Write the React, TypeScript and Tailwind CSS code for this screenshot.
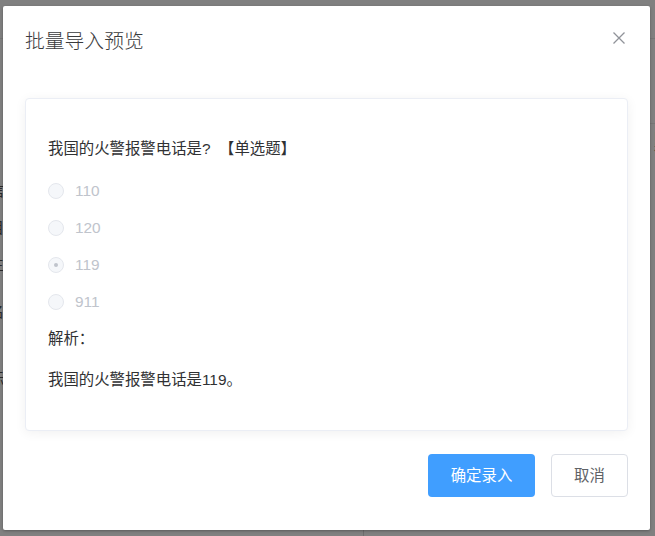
const options = [
  { label: '110', checked: false },
  { label: '120', checked: false },
  { label: '119', checked: true },
  { label: '911', checked: false },
];

function Radio({ label, checked }: { label: string; checked: boolean }) {
  return (
    <label className="flex h-[37px] items-center cursor-not-allowed">
      <span className="flex h-[16px] w-[16px] items-center justify-center rounded-full border border-[#e4e7ed] bg-[#f5f7fa]">
        {checked && <span className="h-[4px] w-[4px] rounded-full bg-[#c0c4cc]" />}
      </span>
      <span className="pl-[11px] text-[15.4px] leading-[22px] text-[#c0c4cc]">{label}</span>
    </label>
  );
}

export default function App() {
  return (
    <div
      className="relative h-[536px] w-[655px] overflow-hidden bg-[#808080]"
      style={{ fontFamily: '"Liberation Sans", "Noto Sans CJK SC", sans-serif' }}
    >
      {/* page behind the mask */}
      <div className="absolute left-0 top-[38px] h-px w-full bg-[#767676]" />
      <div className="absolute right-0 top-[123px] h-px w-[40px] bg-[#767676]" />
      <div className="absolute bottom-0 left-[363px] h-[40px] w-px bg-[#6e6e6e]" />
      <div className="absolute left-[-11px] top-[180px] flex flex-col text-[15px] leading-[22px] text-[#2a2a2a]">
        <span className="h-[37px]">信</span>
        <span className="h-[37px]">目</span>
        <span className="h-[47px]">主</span>
        <span className="h-[67px]">名</span>
        <span>标</span>
      </div>
      <div className="absolute right-[-8px] top-[132px] flex flex-col text-[9px] leading-[10px] text-[#2a2a2a]">
        <span>目</span>
        <span>是</span>
      </div>

      {/* dialog */}
      <div className="absolute left-[3px] top-[6px] flex h-[524px] w-[647px] flex-col rounded-[2px] bg-white shadow-[0_1px_3px_rgba(0,0,0,0.3)]">
        <div className="flex items-start justify-between px-[22px] pb-[11px] pt-[22px]">
          <span className="text-[19.8px] font-light leading-[26px] text-[#3a3b3d]">批量导入预览</span>
          <button className="mr-[3px] mt-[4px] text-[#909399]">
            <svg width="12" height="12" viewBox="0 0 12 12" fill="none" stroke="currentColor" strokeWidth="1.3">
              <path d="M0.5 0.5L11.5 11.5M11.5 0.5L0.5 11.5" />
            </svg>
          </button>
        </div>

        <div className="px-[22px] pt-[33px]">
          <div className="rounded-[4px] border border-[#ebeef5] bg-white px-[22px] pb-[39px] pt-[39px] shadow-[0_2px_12px_rgba(0,0,0,0.06)]">
            <div className="mb-[12px] text-[15.4px] leading-[22px] text-[#303133]">
              我国的火警报警电话是? {'\u00a0'}【单选题】
            </div>
            {options.map((o) => (
              <Radio key={o.label} label={o.label} checked={o.checked} />
            ))}
            <div className="mt-[8px] text-[15.4px] leading-[22px] text-[#303133]">解析：</div>
            <div className="mt-[19px] text-[15.4px] leading-[22px] text-[#303133]">我国的火警报警电话是119。</div>
          </div>
        </div>

        <div className="flex justify-end gap-[16px] px-[22px] pt-[23px]">
          <button className="h-[43px] w-[107px] rounded-[4px] bg-[#409eff] text-[15.4px] text-white">确定录入</button>
          <button className="h-[43px] w-[77px] rounded-[4px] border border-[#dcdfe6] bg-white text-[15.4px] text-[#606266]">
            取消
          </button>
        </div>
      </div>
    </div>
  );
}
